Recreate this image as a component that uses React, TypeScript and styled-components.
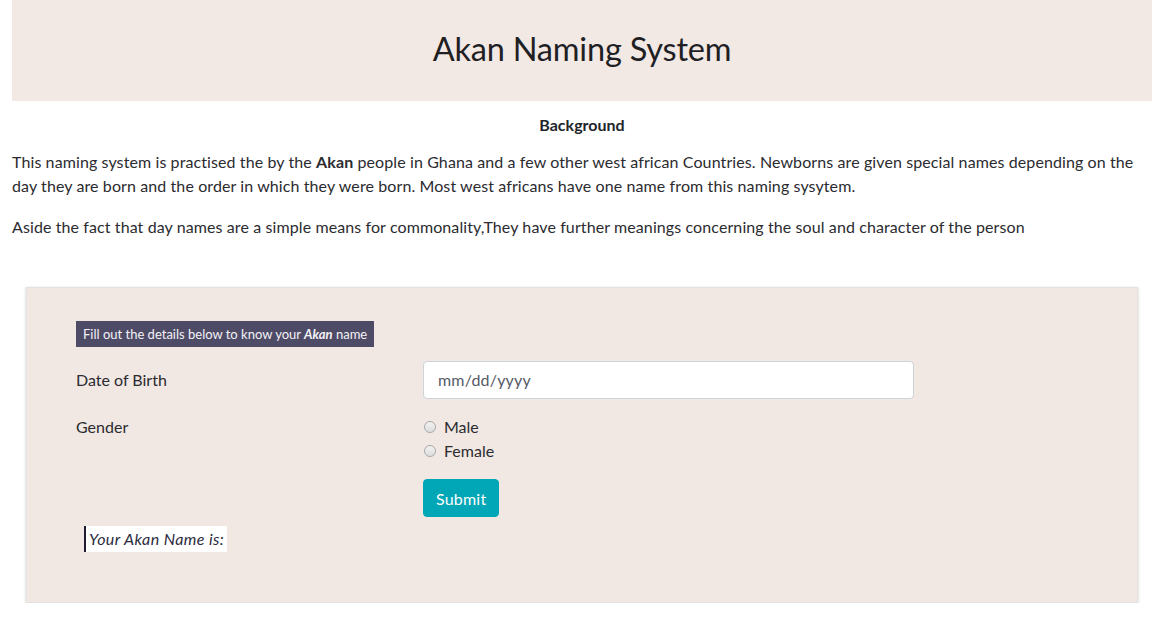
import React from "react";
import styled, { createGlobalStyle } from "styled-components";

const Global = createGlobalStyle`
  html, body { margin: 0; padding: 0; background: #fff; }
  body {
    font-family: Lato, "Open Sans", sans-serif;
    color: #212529;
    font-size: 16px;
    line-height: 24px;
  }
  * { box-sizing: border-box; }
`;

const Page = styled.div`
  padding: 0 23px 0 12px;
`;

const Header = styled.header`
  background: #f2e8e4;
  height: 101px;
  padding-bottom: 4px;
  display: flex;
  align-items: center;
  justify-content: center;
`;

const Title = styled.h1`
  margin: 0;
  font-size: 32.5px;
  font-weight: 400;
  color: #1f1f24;
  letter-spacing: -0.2px;
`;

const SubTitle = styled.h2`
  margin: 12px 0 0;
  text-align: center;
  font-size: 16px;
  font-weight: 700;
  line-height: 24px;
`;

const Para = styled.p`
  margin: 13px 0 0;
  font-size: 16px;
  line-height: 24px;
  letter-spacing: 0.1px;
  color: #2b2b30;
  & + & { margin-top: 17px; }
`;

const Card = styled.section`
  margin: 48px 14px 0 14px;
  background: #f1e8e3;
  border: 1px solid #e4e2e2;
  box-shadow: 0 1px 3px rgba(0, 0, 0, 0.2);
  padding: 33px 49px 50px 49px;
`;

const Badge = styled.div`
  display: inline-block;
  background: #4e4b66;
  color: #f4f2f7;
  font-size: 13px;
  line-height: 26px;
  padding: 0 7px;
`;

const FormGrid = styled.div`
  display: grid;
  grid-template-columns: 347px 491px;
  margin-top: 14px;
`;

const Label = styled.label<{ $top?: number }>`
  font-size: 16px;
  line-height: 24px;
  padding-top: ${(p) => p.$top ?? 0}px;
  color: #2b2b30;
`;

const DateInput = styled.div`
  height: 38px;
  background: #fff;
  border: 1px solid #ced4da;
  border-radius: 4px;
  padding: 0 14px;
  display: flex;
  align-items: center;
  color: #565a66;
  font-size: 16px;
  letter-spacing: 0.2px;
`;

const RadioGroup = styled.div`
  padding-top: 16px;
  display: flex;
  flex-direction: column;
`;

const RadioRow = styled.label`
  display: flex;
  align-items: center;
  gap: 8px;
  height: 24px;
  font-size: 16px;
  color: #2b2b30;
`;

const RadioDot = styled.span`
  width: 12px;
  height: 12px;
  border-radius: 50%;
  border: 1px solid #a9a9a9;
  background: linear-gradient(#f3f3f3, #dcdcdc);
  margin-left: 1px;
`;

const SubmitButton = styled.button`
  margin-top: 16px;
  justify-self: start;
  height: 38px;
  padding: 0 12px;
  background: #01a6b7;
  border: 1px solid #01a6b7;
  border-radius: 4px;
  color: #fff;
  font-family: inherit;
  font-size: 16px;
  letter-spacing: 0.2px;
`;

const Result = styled.div`
  margin-top: 9px;
  margin-left: 8px;
  width: fit-content;
  background: #fff;
  border-left: 2px solid #1e1b33;
  padding: 1px 3px 1px 3px;
  font-style: italic;
  font-size: 16px;
  line-height: 24px;
  letter-spacing: 0.4px;
  color: #2b2b40;
`;

export default function App() {
  return (
    <>
      <Global />
      <Page>
        <Header>
          <Title>Akan Naming System</Title>
        </Header>
        <SubTitle>Background</SubTitle>
        <Para>
          This naming system is practised the by the <b>Akan</b> people in Ghana and a few other west african Countries. Newborns are given special names depending on the day they are born and the order in which they were born. Most west africans have one name from this naming sysytem.
        </Para>
        <Para>
          Aside the fact that day names are a simple means for commonality,They have further meanings concerning the soul and character of the person
        </Para>
        <Card>
          <Badge>
            Fill out the details below to know your <b><i>Akan</i></b> name
          </Badge>
          <FormGrid>
            <Label $top={7}>Date of Birth</Label>
            <DateInput>mm/dd/yyyy</DateInput>
            <Label $top={16}>Gender</Label>
            <RadioGroup>
              <RadioRow><RadioDot />Male</RadioRow>
              <RadioRow><RadioDot />Female</RadioRow>
            </RadioGroup>
            <span />
            <SubmitButton>Submit</SubmitButton>
          </FormGrid>
          <Result>Your Akan Name is:</Result>
        </Card>
      </Page>
    </>
  );
}
